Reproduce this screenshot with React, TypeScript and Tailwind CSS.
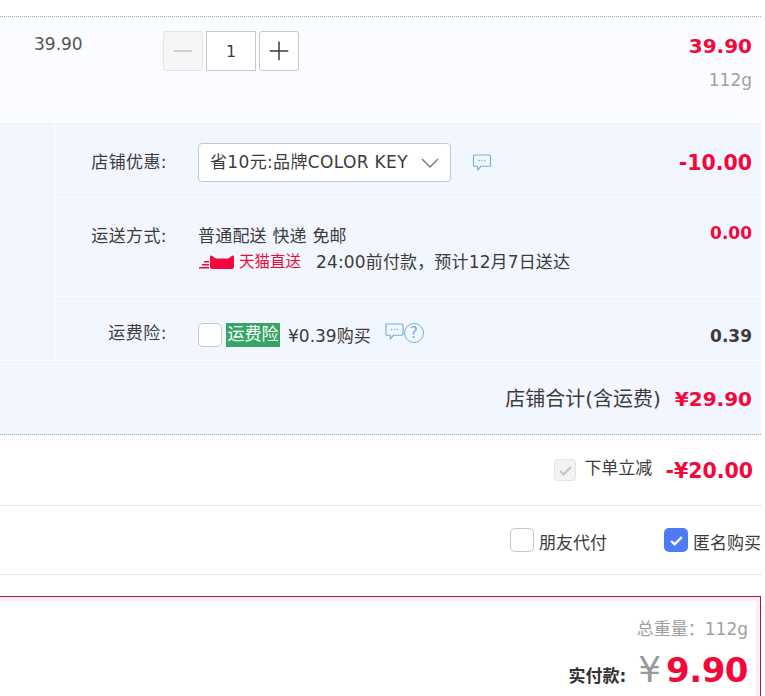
import { Minus, Plus } from 'lucide-react';

const cjk = "font-['DejaVu_Sans','Noto_Sans_CJK_SC',sans-serif]";

const CommentIcon = ({ className }: { className?: string }) => (
  <svg viewBox="0 0 20 18" className={className} fill="none">
    <path
      d="M2 1h16a1 1 0 0 1 1 1v10a1 1 0 0 1-1 1H9l-3.500 3.800V13H2a1 1 0 0 1-1-1V2a1 1 0 0 1 1-1z"
      stroke="#74aedb"
      strokeWidth="1.200"
    />
    <circle cx="7" cy="7" r="0.800" fill="#74aedb" />
    <circle cx="10" cy="7" r="0.800" fill="#74aedb" />
    <circle cx="13" cy="7" r="0.800" fill="#74aedb" />
  </svg>
);

const TmallLogo = () => (
  <svg viewBox="0 0 36 14" className="h-[14px] w-[36px] shrink-0" fill="#f4083c">
    <path d="M6 6h5v1.500H6zM4 9h7v1.500H4zM1 12h10v1.500H1z" />
    <path d="M12 2c0-1.500 1.500-2 2.500-1 1.500 1.500 2.500 2.500 4 2.500h11c1.500 0 2.500-1 4-2.500 1-1 2.500-.5 2.500 1v10a2 2 0 0 1-2 2H14a2 2 0 0 1-2-2z" />
  </svg>
);

const Check = ({ color }: { color: string }) => (
  <svg viewBox="0 0 16 16" className="h-[17px] w-[17px]" fill="none">
    <path d="M3 8.500l3.200 3.200L13 4.800" stroke={color} strokeWidth="2.200" />
  </svg>
);

export default function App() {
  return (
    <div className={`h-[696px] w-[765px] overflow-hidden bg-white text-[17px] text-[#3c3c3c] ${cjk}`}>
      <div className="w-[761px] pt-4">
        {/* Item row */}
        <div className="flex h-[108px] border-t border-dotted border-t-[#8fb0c8] border-b border-b-[#e6e6e6] bg-[#fbfcff]">
          <div className="w-[163px] pl-[34px] pt-[17px] leading-5 text-[#555]">39.90</div>
          <div className="mt-[14px] flex h-10 flex-1 gap-[3px]">
            <button className="flex h-10 w-10 items-center justify-center rounded-[3px] border border-[#e3e5ea] bg-[#f6f6f6]">
              <Minus size={30} strokeWidth={1.200} color="#c4c4c4" />
            </button>
            <div className="flex h-10 w-[50px] items-center justify-center border border-[#c4c8d0] bg-white pt-[1px] text-[16px] text-[#3c3c3c]">
              1
            </div>
            <button className="flex h-10 w-10 items-center justify-center rounded-[3px] border border-[#c4c8d0] bg-white">
              <Plus size={30} strokeWidth={1.200} color="#3c3c3c" />
            </button>
          </div>
          <div className="flex flex-col items-end pr-[9px] pt-[15px]">
            <div className="text-[20px] font-bold leading-7 text-[#f4083c]">39.90</div>
            <div className="mt-[10px] leading-5 text-[#a0a0a0]">112g</div>
          </div>
        </div>

        {/* Shop block */}
        <div className="flex border-b border-b-white bg-[#f2f6fe]">
          <div className="w-[56px] border-r border-r-[#fbfcff]" />
          <div className="flex-1">
            {/* Coupon */}
            <div className="flex h-[74px] border-b border-b-[#fbfcff] pr-[9px]">
              <div className="w-[111px] pt-[27px] text-right leading-[22px] tracking-[0.4px]">店铺优惠:</div>
              <div className="ml-[31px] mt-[19px] flex h-[39px] w-[253px] items-center justify-between rounded-[4px] border border-[#c4c8d0] bg-white pl-[11px] pr-[11px]">
                <span className="whitespace-nowrap pt-[1px] tracking-[0.35px]">省10元:品牌COLOR KEY</span>
                <svg viewBox="0 0 18 10" className="h-[10px] w-[18px] shrink-0" fill="none">
                  <path d="M1 1l8 8 8-8" stroke="#777" strokeWidth="1.300" />
                </svg>
              </div>
              <CommentIcon className="ml-[21px] mt-[30px] h-[17px] w-[20px]" />
              <div className="ml-auto pt-[24px] text-[20.5px] font-bold leading-[30px] text-[#f4083c]">-10.00</div>
            </div>
            {/* Delivery */}
            <div className="flex h-[99px] border-b border-b-[#fbfcff] pr-[9px]">
              <div className="w-[111px] pt-[27px] text-right leading-[22px] tracking-[0.4px]">运送方式:</div>
              <div className="ml-[31px] pt-[27px] leading-[22px]">
                <div className="tracking-[0.2px]">普通配送 快递 免邮</div>
                <div className="mt-[4px] flex items-center">
                  <TmallLogo />
                  <span className="ml-[5px] w-[77px] text-[15.5px] text-[#f4083c]">天猫直送</span>
                  <span className="whitespace-nowrap tracking-[0.15px]">24:00前付款{'\uFF0C'}预计12月7日送达</span>
                </div>
              </div>
              <div className="ml-auto pt-[23px] text-[17px] font-bold leading-6 text-[#f4083c]">0.00</div>
            </div>
            {/* Insurance */}
            <div className="flex h-[63px] pr-[9px]">
              <div className="w-[111px] pt-[25px] text-right leading-[22px] tracking-[0.5px]">运费险:</div>
              <div className="ml-[31px] flex items-start pt-[26px]">
                <span className="h-6 w-6 rounded-[5px] border border-[#c4c8d0] bg-white" />
                <span className="ml-[4px] flex h-6 w-[54px] items-center justify-center whitespace-nowrap bg-[#37a566] text-white">
                  运费险
                </span>
                <span className="ml-[8px] mt-[2px] whitespace-nowrap leading-[22px]">¥0.39购买</span>
                <CommentIcon className="ml-[14px] h-[17px] w-[19px]" />
                <span className="flex h-[20px] w-[20px] items-center justify-center rounded-full border-[1.500px] border-[#6fb0dc] text-[15px] leading-none text-[#6fb0dc]">
                  ?
                </span>
              </div>
              <div className="ml-auto pt-[27px] font-bold leading-6 text-[#3c3c3c]">0.39</div>
            </div>
          </div>
        </div>

        {/* Shop total */}
        <div className="flex h-[74px] items-center justify-end border-b border-dotted border-b-[#8fb0c8] bg-[#f2f6fe] pr-[9px] pt-[2px]">
          <span className="text-[20px]">店铺合计(含运费)</span>
          <span className="ml-[14px] text-[20px] font-bold text-[#f4083c]">¥29.90</span>
        </div>

        {/* Order discount */}
        <div className="flex h-[71px] items-center justify-end border-b border-dotted border-b-[#d8d8d8] pr-[8px]">
          <span className="flex h-[22px] w-[22px] items-center justify-center rounded-[4px] border border-[#e3e5ea] bg-[#f3f3f3]">
            <Check color="#c8c8c8" />
          </span>
          <span className="mb-[3px] ml-[8px]">下单立减</span>
          <span className="ml-[13px] mt-[3px] text-[20.5px] font-bold text-[#f4083c]">-¥20.00</span>
        </div>

        {/* Options */}
        <div className="flex h-[69px] items-center justify-end border-b border-dotted border-b-[#d8d8d8]">
          <span className="h-6 w-6 rounded-[5px] border border-[#c4c8d0] bg-white" />
          <span className="ml-[5px] mt-[7px]">朋友代付</span>
          <span className="ml-[57px] flex h-6 w-6 items-center justify-center rounded-[5px] bg-[#4c7bf3]">
            <Check color="#ffffff" />
          </span>
          <span className="ml-[5px] mt-[7px] whitespace-nowrap">匿名购买</span>
        </div>

        {/* Summary */}
        <div className="-ml-2 mt-[21px] h-[120px] border border-[#c4103f] bg-[#fff0f3] pt-[4px] pr-[4px]">
          <div className="h-full bg-white pr-[8px] pt-[18px] text-right">
            <div className="leading-5 text-[#a0a0a0]">总重量{'\uFF1A'}112g</div>
            <div className="mt-[8px] flex items-baseline justify-end">
              <span className="font-bold text-[#333]">实付款:</span>
              <span className="ml-[12px] text-[36px] leading-[46px] text-[#999]">¥</span>
              <span className="ml-[5px] text-[34px] font-bold leading-[46px] tracking-[-0.5px] text-[#f4083c]">9.90</span>
            </div>
          </div>
        </div>
      </div>
    </div>
  );
}
